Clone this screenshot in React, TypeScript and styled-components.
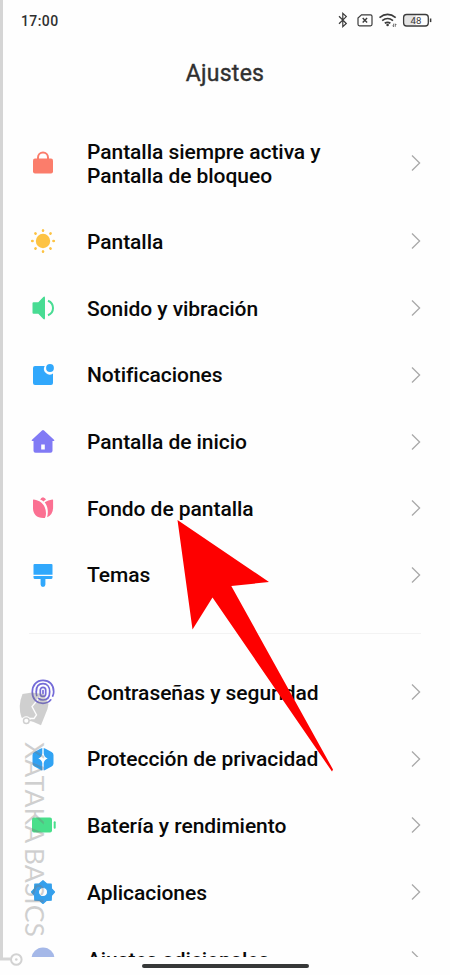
import React from "react";
import styled, { createGlobalStyle } from "styled-components";

const GlobalStyle = createGlobalStyle`
  *, *::before, *::after { box-sizing: border-box; }
  body { margin: 0; background: #fefefe; font-family: Roboto, "Liberation Sans", sans-serif; }
`;

const Screen = styled.main`
  position: relative;
  display: flex;
  flex-direction: column;
  width: 450px;
  height: 975px;
  overflow: hidden;
  background: #fefefe;
`;

const StatusBar = styled.header`
  display: flex;
  align-items: center;
  justify-content: space-between;
  height: 40px;
  padding: 0 18px 0 21px;
  color: #303030;
`;

const Clock = styled.time`
  font-size: 14px;
  font-weight: 500;
  letter-spacing: 0.4px;
  padding-top: 1px;
`;

const StatusIcons = styled.div`
  display: flex;
  align-items: center;
  svg { display: block; }
`;

const Title = styled.h1`
  margin: 0;
  height: 77.5px;
  padding-top: 20px;
  font-size: 23px;
  line-height: 28px;
  font-weight: 400;
  letter-spacing: 0.25px;
  -webkit-text-stroke: 0.4px #303030;
  text-align: center;
  color: #303030;
`;

const List = styled.nav`
  height: 839.5px;
  overflow: hidden;
`;

const Group = styled.ul`
  list-style: none;
  margin: 0;
  padding: 0;
`;

const Divider = styled.hr`
  height: 1px;
  margin: 24.3px 29px 25.2px;
  border: 0;
  background: #f3f3f3;
`;

const Row = styled.li<{ $tall?: boolean }>`
  display: flex;
  align-items: center;
  height: ${(p) => (p.$tall ? "90.6px" : "66.7px")};
  padding: 0 29px 0 30px;
`;

const IconSlot = styled.span`
  flex: 0 0 57px;
  svg { display: block; }
`;

const Label = styled.span<{ $drop: number }>`
  flex: 1;
  padding-top: ${(p) => p.$drop}px;
  font-size: 21px;
  line-height: 24px;
  font-weight: 500;
  white-space: pre-line;
  letter-spacing: -0.05px;
  color: #080808;
`;

const HomeIndicator = styled.div`
  align-self: center;
  width: 167px;
  height: 4px;
  margin-top: 7px;
  border-radius: 2px;
  background: #363838;
`;

const Overlay = styled.svg`
  position: absolute;
  inset: 0;
  pointer-events: none;
`;

const Watermark = styled.div`
  position: absolute;
  left: 18px;
  top: 742px;
  writing-mode: vertical-rl;
  font-family: Lato, sans-serif;
  font-size: 26.7px;
  line-height: 33px;
  word-spacing: -1.5px;
  white-space: nowrap;
  color: rgba(120, 120, 120, 0.34);
`;

const icons = {
  lock: (
    <>
      <path d="M8 11V7.500a5 5 0 0 1 10 0V11" fill="none" stroke="#fb7d6b" strokeWidth="2" />
      <rect x="3" y="8.500" width="20" height="15" rx="2" fill="#fb7d6b" />
    </>
  ),
  sun: (
    <g fill="#fdc343">
      <circle cx="13" cy="13" r="7.2" />
      {[0, 45, 90, 135, 180, 225, 270, 315].map((a) => (
        <ellipse key={a} cx="13" cy="2.4" rx="1.25" ry="1.5" transform={`rotate(${a} 13 13)`} />
      ))}
    </g>
  ),
  sound: (
    <>
      <path d="M3.5 7.2h4.8l5-5.1q1.7-1.3 1.7.8v20.2q0 2.100-1.700.8l-5-5.100H3.500q-1 0-1-1V8.200q0-1 1-1Z" fill="#48dc93" />
      <path d="M18 5.700q5 2 5 7.300t-5 7.300" fill="none" stroke="#48dc93" strokeWidth="2" />
    </>
  ),
  notice: (
    <g fill="#31a8fc">
      <path d="M5 4h9.700a5.700 5.700 0 0 0 8.300 7.400V21q0 2-2 2H5q-2 0-2-2V6q0-2 2-2Z" />
      <circle cx="20" cy="6" r="3.900" />
    </g>
  ),
  home: (
    <path fillRule="evenodd" fill="#817af5" d="M12 1.500q1-1 2 0l10 9.300q1.100 1.200-.4 1.200H22.500v9.700q0 2-2 2h-15q-2 0-2-2V12H2.400Q.9 12 2 10.800ZM11.200 15.500v5h3.600v-5Z" />
  ),
  tulip: (
    <g fill="#fb7092">
      <path d="M10.200 4.800Q11 2.600 13 2.200q2.400.6 3 2.400-1.500.9-2.500 1.800-1.500-1.300-3.300-1.600Z" />
      <path d="M3 5.200q0-.8.8-.6C11 5.700 15.800 10 16 18.500q0 2.600-1.100 4.400C7 23.500 3 19.500 3 13Z" />
      <path d="M14.700 7.300Q18 5 22.300 4.600q.8-.1.800.6v7.300q0 7-6 9.800C18.700 16 17.500 11 14.700 7.300Z" />
    </g>
  ),
  brush: (
    <g fill="#31a8fc">
      <path d="M4.500 2h17q1 0 1 1v9.700h-19V3q0-1 1-1Z" />
      <path d="M3.500 14h19v1.500q0 1.500-1.500 1.500h-5.600v5.500a2.400 2.400 0 0 1-4.800 0V17H5q-1.500 0-1.500-1.500Z" />
    </g>
  ),
  finger: (
    <g fill="none" stroke="#746bd8" strokeWidth="1.700" strokeLinecap="round">
      <rect x="10.300" y="8.400" width="5.400" height="9" rx="2.700" />
      <path d="M13 11.500v3M6.700 16.500a8 8 0 0 1-.4-4C6.300 7.500 9 4.700 13 4.700s6.700 3 6.700 8c0 5.200-2.500 8.300-6.700 8.300q-2.500 0-4.200-1.500" />
      <path d="M22.700 17q1-2 1-4.300c0-7-4.300-11.300-10.700-11.300S2.300 6 2.300 13 6.500 24.300 13 24.300q5 0 7.800-3.500" />
    </g>
  ),
  privacy: (
    <path d="M12.300 2v5.500q-.6 4-4 5 3.400 1 4 4.500v7.500q-1-.2-1.900-.7l-6-3.400Q2.500 19.400 2.500 17.500V9q0-1.900 1.900-3l6-3.300ZM13.700 2v5.500q.6 4 4 5-3.400 1-4 4.500v7.500q1-.2 1.900-.7l6-3.400q1.900-1 1.900-2.900V9q0-1.900-1.900-3l-6-3.300Z" fill="#31a3f3" />
  ),
  battery: (
    <g fill="#48df8b">
      <rect x="2" y="5.500" width="20" height="15" rx="2" />
      <rect x="23.700" y="9.300" width="2" height="7.500" rx="1" />
    </g>
  ),
  gear: (
    <path fillRule="evenodd" fill="#35a0ec" stroke="#35a0ec" strokeWidth="1.200" strokeLinejoin="round" d="m13 1.700 3.600 3.100 4.600.2.200 4.600L24.500 13l-3.100 3.500-.2 4.700-4.600.2-3.600 3.100-3.600-3.100-4.600-.2-.2-4.700L1.500 13l3.100-3.400.2-4.600 4.600-.2ZM13 8.500a4.600 4.600 0 1 0 0 9.200 4.600 4.600 0 0 0 0-9.200Z" />
  ),
  more: <circle cx="13" cy="13" r="11.500" fill="#a5b8e8" />,
};

type Item = { icon: keyof typeof icons; label: string; tall?: boolean; drop?: number };

const display: Item[] = [
  { icon: "lock", label: "Pantalla siempre activa y\nPantalla de bloqueo", tall: true, drop: 2.4 },
  { icon: "sun", label: "Pantalla" },
  { icon: "sound", label: "Sonido y vibración" },
  { icon: "notice", label: "Notificaciones", drop: 0.6 },
  { icon: "home", label: "Pantalla de inicio" },
  { icon: "tulip", label: "Fondo de pantalla" },
  { icon: "brush", label: "Temas", drop: 0.8 },
];

const system: Item[] = [
  { icon: "finger", label: "Contraseñas y seguridad" },
  { icon: "privacy", label: "Protección de privacidad" },
  { icon: "battery", label: "Batería y rendimiento" },
  { icon: "gear", label: "Aplicaciones" },
  { icon: "more", label: "Ajustes adicionales", drop: 3 },
];

const SettingsGroup = ({ items }: { items: Item[] }) => (
  <Group>
    {items.map(({ icon, label, tall, drop = 1.4 }) => (
      <Row key={label} $tall={tall}>
        <IconSlot>
          <svg width="26" height="26" viewBox="0 0 26 26">{icons[icon]}</svg>
        </IconSlot>
        <Label $drop={drop}>{label}</Label>
        <svg width="10" height="18" viewBox="0 0 10 18" fill="none" stroke="#a9a9a9" strokeWidth="1.300">
          <path d="m1 1.500 7.600 7.500L1 16.500" />
        </svg>
      </Row>
    ))}
  </Group>
);

export default function App() {
  return (
    <Screen>
      <GlobalStyle />
      <StatusBar>
        <Clock>17:00</Clock>
        <StatusIcons>
          <svg width="96" height="18" viewBox="336 11 96 18" fill="none" stroke="#3b3b3b" strokeWidth="1.200">
            <path d="m339 16.300 7.300 7.200-3.500 3.200V13.400l3.500 3.200-7.300 7.200" />
            <path d="M361.500 14.800h9q1.500 0 1.500 1.500v8q0 1.500-1.500 1.500h-11q-1.500 0-1.500-1.500V18Z" />
            <path d="m362.700 18 4.400 4.400m0-4.400-4.400 4.400" strokeWidth="1.400" />
            <g strokeWidth="1.700">
              <path d="M379.500 17.600q8.100-6.300 16.200 0M382.200 20.600q5.400-4.200 10.800 0M384.800 23.300q2.800-2 5.600 0" />
            </g>
            <circle cx="387.600" cy="25" r="1.300" fill="#3b3b3b" stroke="none" />
            <path d="M393.600 23.700v3m-1.100-1.100 1.100 1.200M395.300 26.800v-3l1.100 1.200" strokeWidth=".7" />
            <rect x="404" y="15.300" width="12" height="10" fill="#e4e4e4" stroke="none" />
            <rect x="403.600" y="14.500" width="24.700" height="11.500" rx="3" strokeWidth="1.300" />
            <path d="M430.600 18.500v3.600" strokeWidth="1.500" />
            <text x="415.900" y="23.800" textAnchor="middle" fill="#3b3b3b" stroke="none" fontSize="9.600" fontWeight="400" fontFamily="Roboto, sans-serif">48</text>
          </svg>
        </StatusIcons>
      </StatusBar>
      <Title>Ajustes</Title>
      <List>
        <SettingsGroup items={display} />
        <Divider />
        <SettingsGroup items={system} />
      </List>
      <HomeIndicator />
      <Watermark>XATAKA BASICS</Watermark>
      <Overlay width="450" height="975" viewBox="0 0 450 975">
        <mask id="emblem-cut" maskUnits="userSpaceOnUse" x="15" y="688" width="40" height="42">
          <rect x="15" y="688" width="40" height="42" fill="#fff" />
          <path d="m40 697-8 9.500 4.500 8.500-2.500 3.500h-4" fill="none" stroke="#000" strokeWidth="1.300" />
          <circle cx="26.300" cy="720.800" r="4.500" fill="#000" />
        </mask>
        <path d="M0 0h3v957.500h7.500v3H0Z" fill="#d5d5d5" />
        <circle cx="16.300" cy="959.500" r="5.300" fill="none" stroke="#d2d2d2" strokeWidth="2" />
        <circle cx="16.300" cy="959.500" r="1.300" fill="#d2d2d2" />
        <g opacity=".34">
          <path d="M22.500 694 32 692.500 43.500 694 48.500 704 47.500 709 41 725.200 33 721.800 21.500 717.500Q17.500 706 22.500 694Z" fill="#787878" mask="url(#emblem-cut)" />
          <circle cx="26.300" cy="720.800" r="2.800" fill="none" stroke="#787878" strokeWidth="1.500" />
          <path d="M29 720.500h5" stroke="#787878" strokeWidth="1.400" />
        </g>
        <path d="M177.500 520 269 582l-37.700 4L333 769.500l-1 2-119.500-174-20 32Z" fill="#fe0000" />
      </Overlay>
    </Screen>
  );
}
